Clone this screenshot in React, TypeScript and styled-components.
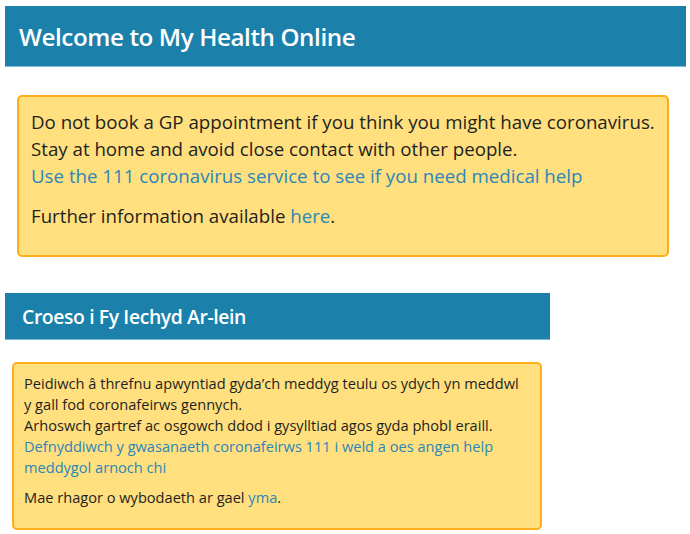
import React from "react";
import styled, { createGlobalStyle } from "styled-components";

const Global = createGlobalStyle`
  html, body { margin: 0; padding: 0; background: #ffffff; }
  body { font-family: "Open Sans", "Noto Sans", sans-serif; color: #1f1f1f; }
`;

const Page = styled.div`
  display: flex;
  flex-direction: column;
  padding: 6px 4px 0 5px;
`;

const Section = styled.section<{ $width: number; $inset: string; $gap: number; $top: number }>`
  width: ${(p) => p.$width}px;
  margin-top: ${(p) => p.$top}px;
  display: flex;
  flex-direction: column;
  gap: ${(p) => p.$gap}px;
  & > div { margin: ${(p) => p.$inset}; }
`;

const Banner = styled.h1<{ $size: number; $height: number; $pad: number }>`
  margin: 0;
  box-sizing: border-box;
  height: ${(p) => p.$height}px;
  display: flex;
  align-items: center;
  padding-left: ${(p) => p.$pad}px;
  background: #1b81ab;
  border-bottom: 1px solid #7cb9d6;
  color: #ffffff;
  font-size: ${(p) => p.$size}px;
  font-weight: 600;
  letter-spacing: -0.4px;
`;

const Alert = styled.div<{ $size: number; $lh: number; $pad: string; $gap: number }>`
  box-sizing: border-box;
  background: #ffdf7e;
  border: 2px solid #ffad1c;
  border-radius: 5px;
  padding: ${(p) => p.$pad};
  font-size: ${(p) => p.$size}px;
  line-height: ${(p) => p.$lh}px;
  color: #1f1f1f;
  display: flex;
  flex-direction: column;
  gap: ${(p) => p.$gap}px;
`;

const Para = styled.p`
  margin: 0;
`;

const Link = styled.a`
  color: #2b87ba;
  text-decoration: none;
`;

export default function App() {
  return (
    <>
      <Global />
      <Page>
        <Section $width={681} $inset="0 17px 0 12px" $gap={28} $top={0}>
          <Banner $size={24.2} $height={61} $pad={14}>Welcome to My Health Online</Banner>
          <Alert $size={18.7} $lh={27} $pad="11px 12px 26px 12px" $gap={13}>
            <Para>
              Do not book a GP appointment if you think you might have coronavirus.
              <br />
              Stay at home and avoid close contact with other people.
              <br />
              <Link href="#">Use the 111 coronavirus service to see if you need medical help</Link>
            </Para>
            <Para>
              Further information available <Link href="#">here</Link>.
            </Para>
          </Alert>
        </Section>
        <Section $width={545} $inset="0 8px 0 7px" $gap={22} $top={36}>
          <Banner $size={19.4} $height={47} $pad={17}>Croeso i Fy Iechyd Ar-lein</Banner>
          <Alert $size={14.6} $lh={21} $pad="9px 12px 20px 10px" $gap={9}>
            <Para>
              Peidiwch â threfnu apwyntiad gyda’ch meddyg teulu os ydych yn meddwl y gall fod coronafeirws gennych.
              <br />
              Arhoswch gartref ac osgowch ddod i gysylltiad agos gyda phobl eraill.
              <br />
              <Link href="#">Defnyddiwch y gwasanaeth coronafeirws 111 i weld a oes angen help meddygol arnoch chi</Link>
            </Para>
            <Para>
              Mae rhagor o wybodaeth ar gael <Link href="#">yma</Link>.
            </Para>
          </Alert>
        </Section>
      </Page>
    </>
  );
}
